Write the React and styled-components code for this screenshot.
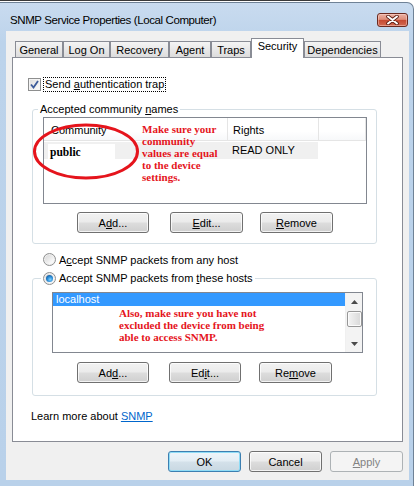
import React from 'react';
import styled, { createGlobalStyle, css } from 'styled-components';

const Global = createGlobalStyle`
  html, body { margin: 0; padding: 0; background: #fff; }
  body { font-family: "Liberation Sans", Arial, sans-serif; font-size: 11px; color: #000; }
  * { box-sizing: border-box; }
`;

const Page = styled.div`
  width: 420px;
  height: 486px;
  overflow: hidden;
  background: #fff;
`;

const EdgeLine = styled.div`
  width: 330px;
  height: 2px;
  border-top: 1px solid #3a3a3a;
`;

const Window = styled.div`
  width: 414px;
  height: 484px;
  border-top: 1px solid #6f8296;
  border-right: 1px solid #6f8296;
  border-top-right-radius: 7px;
  background: linear-gradient(#c9dbef, #bcd3eb 40px, #b9d1ea);
  display: flex;
  flex-direction: column;
`;

const TitleBar = styled.div`
  height: 28px;
  display: flex;
  justify-content: space-between;
  align-items: flex-start;
  padding: 0 5px 0 10px;
`;

const Title = styled.div`
  font-size: 11.5px;
  letter-spacing: -0.4px;
  line-height: 15px;
  padding-top: 10px;
  color: #000;
`;

const CloseBtn = styled.div`
  margin-top: 10px;
  width: 31px;
  height: 14px;
  border: 1px solid #6b2a20;
  border-radius: 3px;
  background: linear-gradient(#eab1a3 0%, #de8e7a 45%, #c64a32 52%, #d26a52 100%);
  box-shadow: inset 0 0 0 1px rgba(255, 220, 210, 0.45);
  display: flex;
  align-items: center;
  justify-content: center;
`;

const Client = styled.div`
  margin-left: 6px;
  width: 403px;
  height: 449px;
  background: #f0f0f0;
  padding: 7px 6px 0 6px;
  display: flex;
  flex-direction: column;
`;

const TabStrip = styled.div`
  height: 20px;
  display: flex;
  align-items: flex-end;
  padding-left: 3px;
  position: relative;
  z-index: 1;
`;

const Tab = styled.div`
  width: ${(p) => p.$w}px;
  height: 16px;
  margin-bottom: 1px;
  border: 1px solid #898c95;
  border-bottom: none;
  background: linear-gradient(#f4f4f4, #e6e6e6 60%, #dcdcdc);
  display: flex;
  align-items: center;
  justify-content: center;
  line-height: 13px;
  padding-top: 1px;
  ${(p) =>
    p.$active &&
    css`
      height: 20px;
      margin-bottom: 0;
      background: #fff;
      padding-top: 0;
      padding-bottom: 4px;
    `}
`;

const Panel = styled.div`
  margin-top: -1px;
  height: 385px;
  border: 1px solid #898c95;
  background: #fff;
  position: relative;
  padding: 19px 0 0 15px;
  display: flex;
  flex-direction: column;
  align-items: flex-start;
`;

const CheckRow = styled.div`
  height: 15px;
  display: flex;
  align-items: center;
`;

const CheckBox = styled.span`
  width: 13px;
  height: 13px;
  border: 1px solid #8e8f8f;
  background: linear-gradient(135deg, #dcdcdc, #fbfbfb);
  box-shadow: inset 0 0 0 1px #f4f4f4;
  display: flex;
  align-items: center;
  justify-content: center;
`;

const FocusLabel = styled.span`
  margin-left: 2px;
  border: 1px dotted #000;
  padding: 0 1px;
  line-height: 13px;
`;

const Group = styled.fieldset`
  margin: ${(p) => p.$mt}px 0 0 4px;
  padding: 0;
  width: 345px;
  min-width: 0;
  border: 1px solid #d5dfe5;
  border-radius: 3px;
`;

const Legend = styled.legend`
  margin-left: ${(p) => p.$ml}px;
  padding: 0 2px;
  line-height: 13px;
  height: 13px;
  display: flex;
  align-items: center;
`;

const GroupBody = styled.div`
  padding: 0 0 ${(p) => p.$pb}px 0;
  display: flex;
  flex-direction: column;
`;

const ListView = styled.div`
  margin: 1px 0 0 10px;
  width: 324px;
  height: 87px;
  border: 1px solid #828790;
  background: #fff;
  display: flex;
  flex-direction: column;
`;

const Header = styled.div`
  height: 23px;
  display: flex;
  border-bottom: 1px solid #e5e5e5;
  background: linear-gradient(#ffffff, #ffffff 60%, #f7f8fa);
`;

const HeadCell = styled.div`
  width: ${(p) => p.$w}px;
  flex: ${(p) => (p.$w ? 'none' : '1')};
  border-right: 1px solid #e5e5e5;
  padding-left: ${(p) => p.$pl}px;
  display: flex;
  align-items: center;
  padding-top: 1px;
`;

const DataRow = styled.div`
  margin-top: 1px;
  width: 274px;
  height: 17px;
  background: #f0f0f0;
  display: flex;
  align-items: flex-start;
`;

const NameCell = styled.div`
  width: 183px;
  padding-left: 4px;
`;

const Erased = styled.span`
  display: block;
  margin-top: 2px;
  width: 67px;
  height: 15px;
  background: #fff;
  padding: 2px 0 0 2px;
  font-family: "Liberation Serif", "Times New Roman", serif;
  font-weight: bold;
  font-size: 11.5px;
  line-height: 13px;
`;

const RightsCell = styled.div`
  padding-left: 5px;
  line-height: 17px;
`;

const ButtonRow = styled.div`
  display: flex;
  margin-top: ${(p) => p.$mt}px;
  padding-left: 44px;
`;

const Btn = styled.button`
  width: ${(p) => p.$w || 72}px;
  height: 21px;
  margin: 0 0 0 ${(p) => p.$ml || 0}px;
  padding: 0;
  font: 11px "Liberation Sans", Arial, sans-serif;
  color: #000;
  border: 1px solid #707070;
  border-radius: 3px;
  background: linear-gradient(#f2f2f2 0%, #ebebeb 48%, #dddddd 52%, #cfcfcf 100%);
  box-shadow: inset 0 0 0 1px rgba(255, 255, 255, 0.75);
  ${(p) =>
    p.$default &&
    css`
      border-color: #3c7fb1;
      box-shadow: inset 0 0 0 1px #8fdcf6;
      background: linear-gradient(#eef5fa 0%, #e3edf4 48%, #d4e1ea 52%, #c9d8e2 100%);
    `}
  ${(p) =>
    p.disabled &&
    css`
      border-color: #adb2b5;
      background: #f4f4f4;
      color: #838383;
      box-shadow: none;
    `}
`;

const RadioRow = styled.div`
  display: flex;
  align-items: center;
  height: 13px;
  margin: ${(p) => p.$mt || 0}px 0 0 ${(p) => p.$ml || 0}px;
`;

const Radio = styled.span`
  width: 13px;
  height: 13px;
  border-radius: 50%;
  border: 1px solid #8e8f8f;
  background: linear-gradient(135deg, #d2d2d2, #f7f7f7 70%, #ffffff);
  box-shadow: inset 0 0 0 1px #f0f0f0;
  display: flex;
  align-items: center;
  justify-content: center;
  margin-right: 3px;
`;

const RadioDot = styled.span`
  width: 7px;
  height: 7px;
  border-radius: 50%;
  background: radial-gradient(circle at 60% 65%, #7fd2ff 0%, #2a8bd6 45%, #0b3f7a 100%);
`;

const ListBox = styled.div`
  margin: 7px 0 0 19px;
  width: 311px;
  height: 61px;
  border: 1px solid #828790;
  background: #fff;
  display: flex;
`;

const Items = styled.div`
  flex: 1;
  overflow: hidden;
`;

const Item = styled.div`
  height: 13px;
  line-height: 13px;
  padding-left: 3px;
  ${(p) =>
    p.$selected &&
    css`
      background: #3399ff;
      color: #fff;
    `}
`;

const ScrollBar = styled.div`
  width: 17px;
  background: #f3f3f3;
  border-left: 1px solid #f0f0f0;
  display: flex;
  flex-direction: column;
  align-items: center;
`;

const Arrow = styled.div`
  height: 17px;
  width: 17px;
  display: flex;
  align-items: center;
  justify-content: center;
`;

const Thumb = styled.div`
  margin-top: 1px;
  width: 15px;
  height: 16px;
  border: 1px solid #979797;
  border-radius: 2px;
  background: linear-gradient(90deg, #f4f4f4, #e6e6e6 50%, #d8d8d8);
  box-shadow: inset 0 0 0 1px #fbfbfb;
`;

const Spacer = styled.div`
  flex: 1;
`;

const LearnRow = styled.div`
  margin: 14px 0 0 3px;
  line-height: 13px;
`;

const Link = styled.a`
  color: #0066cc;
  text-decoration: underline;
`;

const BottomBar = styled.div`
  margin-top: 9px;
  display: flex;
  justify-content: flex-end;
  gap: 8px;
`;

const Ellipse = styled.svg`
  position: absolute;
  left: 19px;
  top: 65px;
  pointer-events: none;
`;

const Note = styled.div`
  position: absolute;
  left: ${(p) => p.$x}px;
  top: ${(p) => p.$y}px;
  font-family: "Liberation Serif", "Times New Roman", serif;
  font-weight: bold;
  font-size: 11px;
  line-height: 12px;
  color: #e5141c;
  white-space: nowrap;
`;

const tabs = [
  ['General', 48],
  ['Log On', 47],
  ['Recovery', 59],
  ['Agent', 42],
  ['Traps', 40],
  ['Security', 53, true],
  ['Dependencies', 77],
];

const UpArrow = () => (
  <svg width="7" height="4" viewBox="0 0 7 4">
    <path d="M0 4 L3.5 0 L7 4 Z" fill="#4a4a4a" />
  </svg>
);

const DownArrow = () => (
  <svg width="7" height="4" viewBox="0 0 7 4">
    <path d="M0 0 L3.5 4 L7 0 Z" fill="#4a4a4a" />
  </svg>
);

export default function App() {
  return (
    <Page>
      <Global />
      <EdgeLine />
      <Window>
        <TitleBar>
          <Title>SNMP Service Properties (Local Computer)</Title>
          <CloseBtn>
            <svg width="13" height="10" viewBox="0 0 13 10">
              <path d="M2 1.5 L11 8.5 M11 1.5 L2 8.5" stroke="#5a1c12" strokeWidth="3.6" strokeLinecap="round" />
              <path d="M2 1.5 L11 8.5 M11 1.5 L2 8.5" stroke="#ffffff" strokeWidth="2" strokeLinecap="round" />
            </svg>
          </CloseBtn>
        </TitleBar>
        <Client>
          <TabStrip>
            {tabs.map(([t, w, a]) => (
              <Tab key={t} $w={w} $active={a}>
                {t}
              </Tab>
            ))}
          </TabStrip>
          <Panel>
            <CheckRow>
              <CheckBox>
                <svg width="9" height="9" viewBox="0 0 9 9">
                  <path d="M1 4.5 L3.5 7.5 L8 1" fill="none" stroke="#3b5a99" strokeWidth="1.8" />
                </svg>
              </CheckBox>
              <FocusLabel>
                Send <u>a</u>uthentication trap
              </FocusLabel>
            </CheckRow>

            <Group $mt={11}>
              <Legend $ml={5}>
                <span>
                  Accepted community <u>n</u>ames
                </span>
              </Legend>
              <GroupBody $pb={10}>
                <ListView>
                  <Header>
                    <HeadCell $w={184} $pl={7}>Community</HeadCell>
                    <HeadCell $w={91} $pl={5}>Rights</HeadCell>
                    <HeadCell />
                  </Header>
                  <DataRow>
                    <NameCell>
                      <Erased>public</Erased>
                    </NameCell>
                    <RightsCell>READ ONLY</RightsCell>
                  </DataRow>
                </ListView>
                <ButtonRow $mt={8}>
                  <Btn>
                    A<u>d</u>d...
                  </Btn>
                  <Btn $ml={21} $w={73}>
                    <u>E</u>dit...
                  </Btn>
                  <Btn $ml={17} $w={73}>
                    <u>R</u>emove
                  </Btn>
                </ButtonRow>
              </GroupBody>
            </Group>

            <RadioRow $mt={9} $ml={15}>
              <Radio />
              <span>
                A<u>c</u>cept SNMP packets from any host
              </span>
            </RadioRow>

            <Group $mt={6}>
              <Legend $ml={8}>
                <Radio>
                  <RadioDot />
                </Radio>
                <span>
                  Accept SNMP packets from <u>t</u>hese hosts
                </span>
              </Legend>
              <GroupBody $pb={12}>
                <ListBox>
                  <Items>
                    <Item $selected>localhost</Item>
                  </Items>
                  <ScrollBar>
                    <Arrow>
                      <UpArrow />
                    </Arrow>
                    <Thumb />
                    <Spacer />
                    <Arrow>
                      <DownArrow />
                    </Arrow>
                  </ScrollBar>
                </ListBox>
                <ButtonRow $mt={9}>
                  <Btn>
                    Ad<u>d</u>...
                  </Btn>
                  <Btn $ml={20}>
                    Ed<u>i</u>t...
                  </Btn>
                  <Btn $ml={18} $w={73}>
                    Re<u>m</u>ove
                  </Btn>
                </ButtonRow>
              </GroupBody>
            </Group>

            <LearnRow>
              Learn more about <Link>SNMP</Link>
            </LearnRow>

            <Ellipse width="108" height="57" viewBox="0 0 108 57">
              <ellipse cx="54" cy="28.5" rx="51.5" ry="26.5" fill="none" stroke="#e5141c" strokeWidth="3" />
            </Ellipse>
            <Note $x={129} $y={65}>
              Make sure your
              <br />
              community
              <br />
              values are equal
              <br />
              to the device
              <br />
              settings.
            </Note>
            <Note $x={106} $y={249}>
              Also, make sure you have not
              <br />
              excluded the device from being
              <br />
              able to access SNMP.
            </Note>
          </Panel>
          <BottomBar>
            <Btn $w={73} $default>
              OK
            </Btn>
            <Btn $w={73}>Cancel</Btn>
            <Btn $w={73} disabled>
              <u>A</u>pply
            </Btn>
          </BottomBar>
        </Client>
      </Window>
    </Page>
  );
}
